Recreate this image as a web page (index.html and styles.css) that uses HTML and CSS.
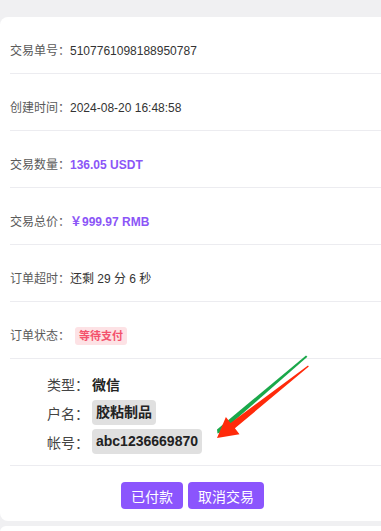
FILE: index.html
```html
<!DOCTYPE html>
<html lang="zh-CN">

<head>
  <meta charset="UTF-8" />
  <meta name="viewport" content="width=device-width, initial-scale=1" />
  <title>订单详情</title>
  <link rel="stylesheet" href="styles.css">
</head>

<body>
  <div class="order-card">
    <div class="info-row">
      <span class="label">交易单号：</span><span class="value">5107761098188950787</span>
    </div>
    <div class="info-row">
      <span class="label">创建时间：</span><span class="value">2024-08-20 16:48:58</span>
    </div>
    <div class="info-row">
      <span class="label">交易数量：</span><span class="value highlight">136.05 USDT</span>
    </div>
    <div class="info-row">
      <span class="label">交易总价：</span><span class="value highlight">￥999.97 RMB</span>
    </div>
    <div class="info-row">
      <span class="label">订单超时：</span><span class="value">还剩 29 分 6 秒</span>
    </div>
    <div class="info-row">
      <span class="label">订单状态：</span><span class="status-tag">等待支付</span>
    </div>

    <!-- payee account -->
    <div class="account">
      <div class="account-row">
        <span class="account-label">类型：</span><span class="account-value">微信</span>
      </div>
      <div class="account-row">
        <span class="account-label">户名：</span><span class="account-value boxed">胶粘制品</span>
      </div>
      <div class="account-row">
        <span class="account-label">帐号：</span><span class="account-value boxed">abc1236669870</span>
      </div>

      <svg class="arrows" width="120" height="100" viewBox="200 345 120 100">
        <polygon fill="#1aa84a" points="306,354.5 307.4,355.8 221.5,431 217.5,432.5 217,428.5" />
        <polygon fill="#ff2a0a" points="308,364.5 230.5,421.9 225.9,416 217,437 239.5,433.2 234.9,427.3 308.8,365.6" />
      </svg>
    </div>

    <div class="actions">
      <button class="btn">已付款</button>
      <button class="btn">取消交易</button>
    </div>
  </div>

  <div class="next-card"></div>
</body>

</html>
```

FILE: styles.css
```css
body {
  margin: 0;
  padding-top: 17px;
  background-color: #f0f0f2;
  font-family: "Liberation Sans", "Noto Sans CJK SC", sans-serif;
  overflow-x: hidden;
}

.order-card {
  width: calc(100% + 4px);
  background: #fff;
  border-radius: 8px 0 0 8px;
}

.info-row {
  margin-left: 10px;
  padding: 25px 0 13px;
  line-height: 18px;
  font-size: 12px;
  border-bottom: 1px solid #ececf0;
  display: flex;
  align-items: center;
}

.label {
  color: #5a5a5a;
}

.value {
  color: #333;
}

.value.highlight {
  color: #8b55f7;
  font-weight: bold;
}

.status-tag {
  margin-left: 5px;
  height: 18px;
  line-height: 18px;
  padding: 0 4px;
  font-size: 11px;
  font-weight: bold;
  color: #f4516c;
  background: #fde2e5;
  border-radius: 3px;
}

/* payee account */
.account {
  position: relative;
  margin-left: 10px;
  padding: 10px 0 9px 37px;
  border-bottom: 1px solid #ececf0;
  font-size: 14px;
}

.account-row {
  height: 29px;
  display: flex;
  align-items: center;
}

.account-label {
  width: 45px;
  color: #444;
}

.account-value {
  color: #222;
  font-weight: bold;
}

.account-value.boxed {
  background: #e0e0e0;
  border-radius: 4px;
  padding: 0 4px;
  height: 25px;
  line-height: 25px;
}

.arrows {
  position: absolute;
  left: 190px;
  top: -13px;
}

.actions {
  display: flex;
  justify-content: center;
  gap: 5px;
  padding: 16px 0 12px;
}

.btn {
  height: 27px;
  padding: 0 10px;
  border: none;
  border-radius: 4px;
  background: #8b55fd;
  color: #fff;
  font-family: inherit;
  font-size: 14px;
  cursor: pointer;
}

.next-card {
  margin-top: 5px;
  height: 20px;
  background: #fff;
  border-radius: 6px 0 0 0;
}
```
